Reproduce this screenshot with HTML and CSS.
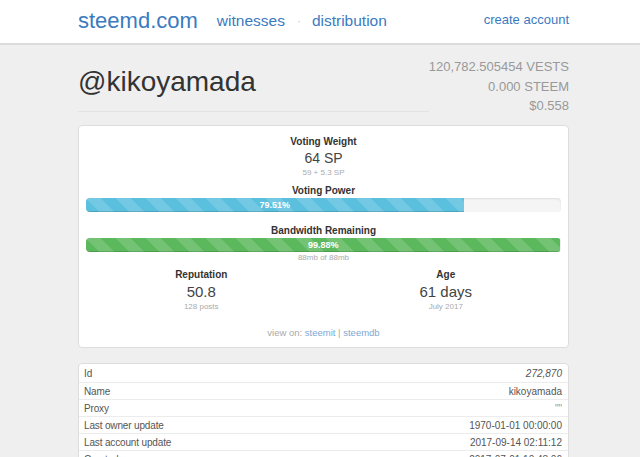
FILE: index.html
```html
<!DOCTYPE html>
<html lang="en">
<head>
  <meta charset="UTF-8">
  <title>@kikoyamada - steemd.com</title>
  <link rel="stylesheet" href="styles.css">
</head>
<body>

<!-- Top nav -->
<header class="navbar">
  <div class="container nav-inner">
    <a class="brand" href="#">steemd.com</a>
    <nav class="nav-links">
      <a href="#">witnesses</a>
      <span class="dot">&middot;</span>
      <a href="#">distribution</a>
    </nav>
    <a class="create" href="#">create account</a>
  </div>
</header>

<div class="container">
  <!-- Account header -->
  <div class="profile-head">
    <div class="page-header">
      <h1>@kikoyamada</h1>
    </div>
    <div class="balances">
      <div>120,782.505454 VESTS</div>
      <div>0.000 STEEM</div>
      <div>$0.558</div>
    </div>
  </div>

  <!-- Voting / bandwidth -->
  <div class="panel">
    <div class="panel-body">
      <div class="label">Voting Weight</div>
      <div class="big">64 SP</div>
      <div class="sub">59 + 5.3 SP</div>

      <div class="label gap-sm">Voting Power</div>
      <div class="progress">
        <div class="bar bar-info" style="width: 79.51%">79.51%</div>
      </div>

      <div class="label gap-lg">Bandwidth Remaining</div>
      <div class="progress">
        <div class="bar bar-success" style="width: 99.88%">99.88%</div>
      </div>
      <div class="sub">88mb of 88mb</div>

      <div class="stats">
        <div class="stat">
          <div class="label">Reputation</div>
          <div class="big">50.8</div>
          <div class="sub">128 posts</div>
        </div>
        <div class="stat">
          <div class="label">Age</div>
          <div class="big">61 days</div>
          <div class="sub">July 2017</div>
        </div>
      </div>

      <div class="view-on">view on: <a href="#">steemit</a> | <a href="#">steemdb</a></div>
    </div>
  </div>

  <!-- Account props -->
  <div class="panel props">
    <div class="row"><span>Id</span><span class="val"><em>272,870</em></span></div>
    <div class="row"><span>Name</span><span class="val">kikoyamada</span></div>
    <div class="row"><span>Proxy</span><span class="val muted">""</span></div>
    <div class="row"><span>Last owner update</span><span class="val">1970-01-01 00:00:00</span></div>
    <div class="row"><span>Last account update</span><span class="val">2017-09-14 02:11:12</span></div>
    <div class="row"><span>Created</span><span class="val">2017-07-01 10:48:06</span></div>
    <div class="row"><span>Mined</span><span class="val">false</span></div>
    <div class="row"><span>Owner challenged</span><span class="val">false</span></div>
  </div>
</div>

</body>
</html>
```

FILE: styles.css
```css
body {
  margin: 0;
  background: #efefef;
  font-family: "Liberation Sans", Arial, sans-serif;
  color: #333;
}
a {
  color: #3a7bbf;
  text-decoration: none;
}
.container {
  width: 491px;
  margin: 0 71px 0 78px;
}

/* nav */
.navbar {
  background: white;
  height: 43px;
  border-bottom: 2px solid #dcdcdc;
}
.nav-inner {
  display: flex;
  align-items: center;
  height: 100%;
}
.brand {
  font-size: 22px;
  margin-top: -2px;
}
.nav-links {
  display: flex;
  align-items: center;
  margin-left: 19px;
  font-size: 15.5px;
  margin-top: -2px;
}
.dot {
  color: #ccc;
  margin: 0 11px 0 12px;
  font-size: 12px;
}
.create {
  margin-left: auto;
  font-size: 13px;
  margin-top: -4px;
}

/* profile header */
.profile-head {
  display: grid;
  grid-template-columns: 1fr auto;
  align-items: start;
}
.page-header {
  padding: 20px 0 12px;
  border-bottom: 1px solid #e3e3e3;
}
.page-header h1 {
  margin: 0;
  font-size: 28px;
  line-height: 34px;
  font-weight: normal;
  color: #333;
}
.balances {
  margin-top: 12px;
  text-align: right;
  font-size: 13px;
  line-height: 19.5px;
  color: #999;
}

/* panels */
.panel {
  background: white;
  border: 1px solid #ddd;
  border-radius: 4px;
  margin-top: 9px;
}
.panel-body {
  padding: 9px 7px 7px;
  text-align: center;
}
.label {
  font-size: 10px;
  line-height: 14px;
  font-weight: bold;
  color: #333;
}
.big {
  font-size: 14px;
  line-height: 18px;
  color: #444;
}
.sub {
  font-size: 8px;
  line-height: 12px;
  color: #aaa;
}
.gap-sm {
  margin-top: 5px;
}
.gap-lg {
  margin-top: 12px;
}
.progress {
  height: 14px;
  background: #f5f5f5;
  border-radius: 4px;
  box-shadow: inset 0 1px 2px rgba(0,0,0,0.1);
  overflow: hidden;
  text-align: left;
}
.bar {
  height: 100%;
  font-size: 9px;
  line-height: 14px;
  font-weight: bold;
  color: white;
  text-align: center;
  background-image: linear-gradient(45deg, rgba(255,255,255,.15) 25%, transparent 25%, transparent 50%, rgba(255,255,255,.15) 50%, rgba(255,255,255,.15) 75%, transparent 75%, transparent);
  background-size: 30px 30px;
  box-shadow: inset 0 -1px 0 rgba(0,0,0,0.15);
}
.bar-info {
  background-color: #5bc0de;
}
.bar-success {
  background-color: #5cb85c;
}
.stats {
  display: grid;
  grid-template-columns: 1fr 1fr;
  margin: 4px -7px 0;
}
.stats .big {
  font-size: 15px;
  line-height: 19px;
}
.view-on {
  margin-top: 13px;
  font-size: 9.5px;
  line-height: 14px;
  color: #aaa;
}
.view-on a {
  color: #7ea7d3;
}

/* props table */
.props {
  margin-top: 15px;
}
.row {
  display: flex;
  justify-content: space-between;
  padding: 1px 6px 0 5px;
  height: 15px;
  font-size: 10px;
  line-height: 16px;
  color: #555;
  border-top: 1px solid #ececec;
  letter-spacing: -0.15px;
}
.row:first-child {
  border-top: none;
  height: 17px;
  line-height: 18px;
}
.val {
  letter-spacing: 0;
}
.muted {
  color: #999;
}
```
